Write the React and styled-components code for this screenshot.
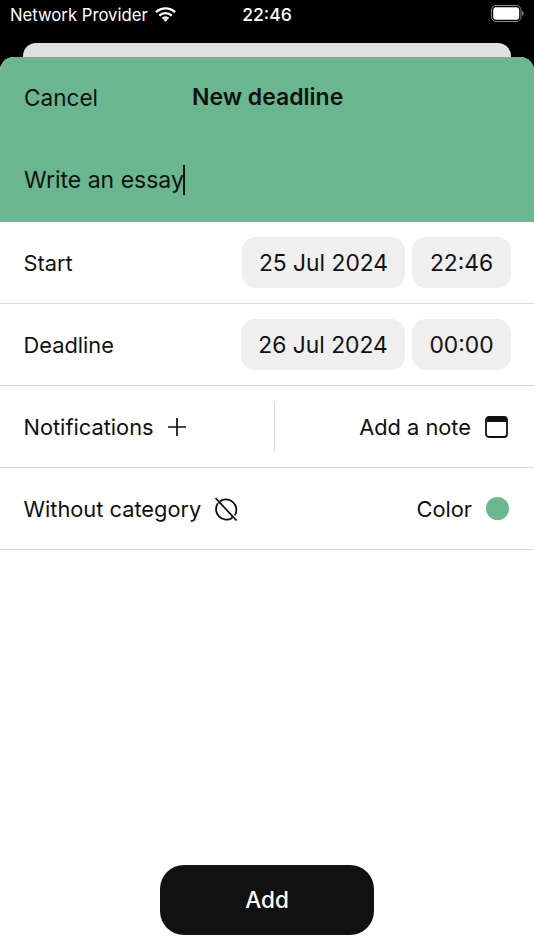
import React from "react";
import styled, { createGlobalStyle } from "styled-components";

const GlobalStyle = createGlobalStyle`
  html, body {
    margin: 0;
    padding: 0;
    background: #000;
  }
  body {
    font-family: Inter, "Liberation Sans", sans-serif;
    -webkit-font-smoothing: antialiased;
  }
`;

const GREEN = "#6ab78f";

function WifiIcon() {
  return (
    <svg width="21" height="15" viewBox="0 0 21 15" fill="none" stroke="#fff" strokeWidth="2.4">
      <path d="M1 5.2a13.6 13.6 0 0 1 19 0" />
      <path d="M4.3 8.6a8.9 8.9 0 0 1 12.4 0" />
      <path d="M7.5 11.6a4.3 4.3 0 0 1 6 0" />
      <path d="M10.5 15l-2-2.2a2.9 2.9 0 0 1 4 0z" fill="#fff" stroke="none" />
    </svg>
  );
}

function BatteryIcon() {
  return (
    <svg width="33" height="17" viewBox="0 0 33 17" fill="none">
      <rect x="0.5" y="0.5" width="29.5" height="16" rx="4.6" stroke="#8c8c8c" />
      <rect x="2.2" y="2.2" width="26" height="12.6" rx="3" fill="#fff" />
      <path d="M31.2 6v5c.9-.3 1.5-1.400 1.500-2.500S32.100 6.300 31.200 6z" fill="#8c8c8c" />
    </svg>
  );
}

function PlusIcon() {
  return (
    <svg width="20" height="20" viewBox="0 0 20 20" fill="none" stroke="#111" strokeWidth="1.7">
      <path d="M10 1v18M1 10h18" />
    </svg>
  );
}

function NoCategoryIcon() {
  return (
    <svg width="26" height="26" viewBox="0 0 26 26" fill="none" stroke="#111" strokeWidth="1.8">
      <path d="M6.600 5.600A10.400 10.400 0 0 1 21.800 19.300" />
      <path d="M4.700 7.600A10.400 10.400 0 0 0 19.200 21.900" />
      <path d="M4.600 7.100a16 16 0 0 1 3-.3M18.900 22.100a16 16 0 0 0 .2-3" strokeWidth="1.300" />
      <path d="M2.500 2l21 22.500" />
    </svg>
  );
}

function NoteIcon() {
  return (
    <svg width="23" height="22" viewBox="0 0 23 22" fill="none">
      <rect x="1" y="1" width="21" height="20" rx="3" stroke="#111" strokeWidth="1.800" />
      <path d="M1 4a3 3 0 0 1 3-3h15a3 3 0 0 1 3 3v2H1z" fill="#111" />
    </svg>
  );
}

export default function App() {
  return (
    <>
      <GlobalStyle />
      <Page>
        <StatusBar>
          <Carrier>
            Network Provider
            <WifiIcon />
          </Carrier>
          <Clock>22:46</Clock>
          <BatteryWrap>
            <BatteryIcon />
          </BatteryWrap>
        </StatusBar>
        <BackCard />
        <Sheet>
          <Header>
            <NavRow>
              <Cancel>Cancel</Cancel>
              <Title>New deadline</Title>
            </NavRow>
            <TitleInput>
              Write an essay
              <Caret />
            </TitleInput>
          </Header>
          <Row>
            <Label>Start</Label>
            <Pickers>
              <Chip $width={163}>25 Jul 2024</Chip>
              <Chip $width={99}>22:46</Chip>
            </Pickers>
          </Row>
          <Row>
            <Label>Deadline</Label>
            <Pickers>
              <Chip $width={164}>26 Jul 2024</Chip>
              <Chip $width={99}>00:00</Chip>
            </Pickers>
          </Row>
          <Row>
            <HalfCell>
              <Label>Notifications</Label>
              <PlusIcon />
            </HalfCell>
            <Divider />
            <NoteCell>
              <Label>Add a note</Label>
              <NoteIcon />
            </NoteCell>
          </Row>
          <Row>
            <CategoryCell>
              <Label>Without category</Label>
              <NoCategoryIcon />
            </CategoryCell>
            <ColorCell>
              <Label>Color</Label>
              <ColorDot />
            </ColorCell>
          </Row>
          <Footer>
            <AddButton>Add</AddButton>
          </Footer>
        </Sheet>
      </Page>
    </>
  );
}

const Page = styled.div`
  width: 534px;
  height: 950px;
  background: #000;
  display: flex;
  flex-direction: column;
  overflow: hidden;
`;

const StatusBar = styled.div`
  height: 43px;
  flex: none;
  display: grid;
  grid-template-columns: 1fr auto 1fr;
  align-items: start;
  padding: 5px 10px 0;
  box-sizing: border-box;
  color: #fff;
`;

const Carrier = styled.div`
  display: flex;
  align-items: center;
  gap: 7px;
  font-size: 16.700px;
  line-height: 20px;
  svg {
    margin-top: -1px;
  }
`;

const Clock = styled.div`
  font-size: 17.600px;
  font-weight: 500;
  line-height: 20px;
`;

const BatteryWrap = styled.div`
  display: flex;
  justify-content: flex-end;
`;

const BackCard = styled.div`
  flex: none;
  height: 14px;
  margin: 0 23px;
  background: #e0e0e0;
  border-radius: 13px 13px 0 0;
`;

const Sheet = styled.div`
  flex: 1;
  display: flex;
  flex-direction: column;
  background: #fff;
  border-radius: 14px 14px 0 0;
  overflow: hidden;
`;

const Header = styled.div`
  flex: none;
  height: 165px;
  box-sizing: border-box;
  background: ${GREEN};
  padding: 25px 24px 0;
  color: #111;
`;

const NavRow = styled.div`
  display: flex;
  align-items: center;
  height: 30px;
`;

const Cancel = styled.div`
  width: 168px;
  font-size: 22.600px;
`;

const Title = styled.div`
  font-size: 23px;
  font-weight: 600;
`;

const TitleInput = styled.div`
  display: flex;
  align-items: center;
  margin-top: 52px;
  height: 32px;
  font-size: 23px;
`;

const Caret = styled.span`
  display: block;
  width: 2px;
  height: 30px;
  background: #111;
  margin-left: -1px;
`;

const Row = styled.div`
  flex: none;
  height: 82px;
  box-sizing: border-box;
  display: flex;
  align-items: center;
  justify-content: space-between;
  padding: 0 23px 0 23.500px;
  border-bottom: 1px solid #d9d9d9;
`;

const Label = styled.span`
  font-size: 21.800px;
  color: #111;
`;

const Pickers = styled.div`
  display: flex;
  gap: 7px;
`;

const Chip = styled.div`
  width: ${(p) => p.$width}px;
  height: 51px;
  display: flex;
  align-items: center;
  justify-content: center;
  background: #efefef;
  border-radius: 14px;
  font-size: 22.800px;
  color: #111;
`;

const HalfCell = styled.div`
  width: 250.500px;
  display: flex;
  align-items: center;
  gap: 13px;
`;

const Divider = styled.div`
  width: 1px;
  height: 50px;
  background: #d9d9d9;
`;

const NoteCell = styled.div`
  flex: 1;
  display: flex;
  align-items: center;
  justify-content: flex-end;
  gap: 14px;
  margin-right: 3px;
`;

const CategoryCell = styled.div`
  display: flex;
  align-items: center;
  gap: 12px;
`;

const ColorCell = styled.div`
  display: flex;
  align-items: center;
  gap: 14px;
  margin-right: 2px;
`;

const ColorDot = styled.span`
  display: block;
  width: 23px;
  height: 23px;
  border-radius: 50%;
  background: ${GREEN};
`;

const Footer = styled.div`
  flex: 1;
  display: flex;
  align-items: flex-end;
  justify-content: center;
  padding-bottom: 15px;
`;

const AddButton = styled.button`
  width: 214px;
  height: 70px;
  border: none;
  border-radius: 24px;
  background: #111;
  color: #fff;
  font-family: inherit;
  font-size: 22.500px;
  font-weight: 500;
  padding-bottom: 2px;
`;
